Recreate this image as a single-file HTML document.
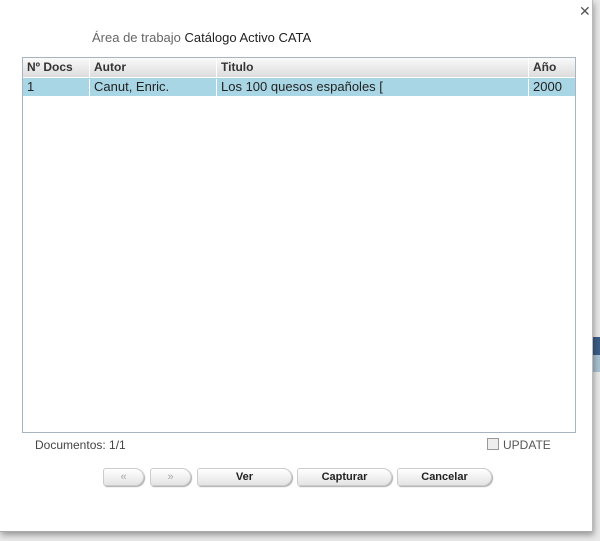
<!DOCTYPE html>
<html><head><style>
body{margin:0;width:600px;height:541px;background:#e8e8e8;position:relative;overflow:hidden;font-family:"Liberation Sans",Tahoma,sans-serif;}
.dlg{position:absolute;left:0;top:0;width:592px;height:531px;background:#fff;border-right:1px solid #bbb;border-bottom:1px solid #aaa;box-shadow:1px 3px 6px rgba(0,0,0,.35);}
.x{position:absolute;left:579px;top:3px;font-size:14px;color:#555;}
.ttl{position:absolute;left:92px;top:30px;font-size:13px;color:#666;}
.ttl b{font-weight:normal;color:#222;}
.tbl{position:absolute;left:22px;top:57px;width:552px;height:374px;border:1px solid #a8b4c0;}
.hd{position:absolute;left:0;top:0;width:552px;height:19px;background:linear-gradient(#fafafa,#dcdcdc);font-weight:bold;font-size:12px;color:#333;}
.row{position:absolute;left:0;top:20px;width:552px;height:18px;background:#a9d6e5;font-size:13px;color:#222;}
.c{position:absolute;top:2px;height:15px;}
.hd .c{border-left:1px solid #fff;top:0;height:19px;line-height:19px;padding-left:4px;}
.row .c{top:1px;padding-left:4px;border-left:1px solid #fff;height:17px;}
.docs{position:absolute;left:35px;top:438px;font-size:12px;color:#444;}
.upd{position:absolute;left:487px;top:438px;font-size:12px;color:#555;}
.upd span{display:inline-block;width:10px;height:10px;border:1px solid #999;background:#eee;vertical-align:-1px;margin-right:4px;}
.btn{position:absolute;top:468px;height:16px;border:1px solid #ccc;border-radius:3px 9px 9px 3px;background:linear-gradient(#fff,#e4e4e4);box-shadow:1px 1px 1px #aaa;font-size:11px;font-weight:bold;text-align:center;line-height:16px;color:#222;}
</style></head><body>
<div style="position:absolute;left:593px;top:337px;width:7px;height:18px;background:#3d5d85"></div>
<div style="position:absolute;left:593px;top:355px;width:7px;height:17px;background:#a8c0d0"></div>
<div class="dlg">
<div class="x">✕</div>
<div class="ttl">Área de trabajo <b>Catálogo Activo CATA</b></div>
<div class="tbl">
<div class="hd"><div class="c" style="left:0;border:0">Nº Docs</div><div class="c" style="left:66px">Autor</div><div class="c" style="left:193px">Titulo</div><div class="c" style="left:505px">Año</div></div>
<div class="row"><div class="c" style="left:0;border:0">1</div><div class="c" style="left:66px">Canut, Enric.</div><div class="c" style="left:193px">Los 100 quesos españoles [</div><div class="c" style="left:505px">2000</div></div>
</div>
<div class="docs">Documentos: 1/1</div>
<div class="upd"><span></span>UPDATE</div>
<div class="btn" style="left:103px;width:39px;color:#aaa;font-weight:normal">«</div>
<div class="btn" style="left:150px;width:39px;color:#aaa;font-weight:normal">»</div>
<div class="btn" style="left:197px;width:93px">Ver</div>
<div class="btn" style="left:297px;width:93px">Capturar</div>
<div class="btn" style="left:397px;width:93px">Cancelar</div>
</div>
</body></html>
